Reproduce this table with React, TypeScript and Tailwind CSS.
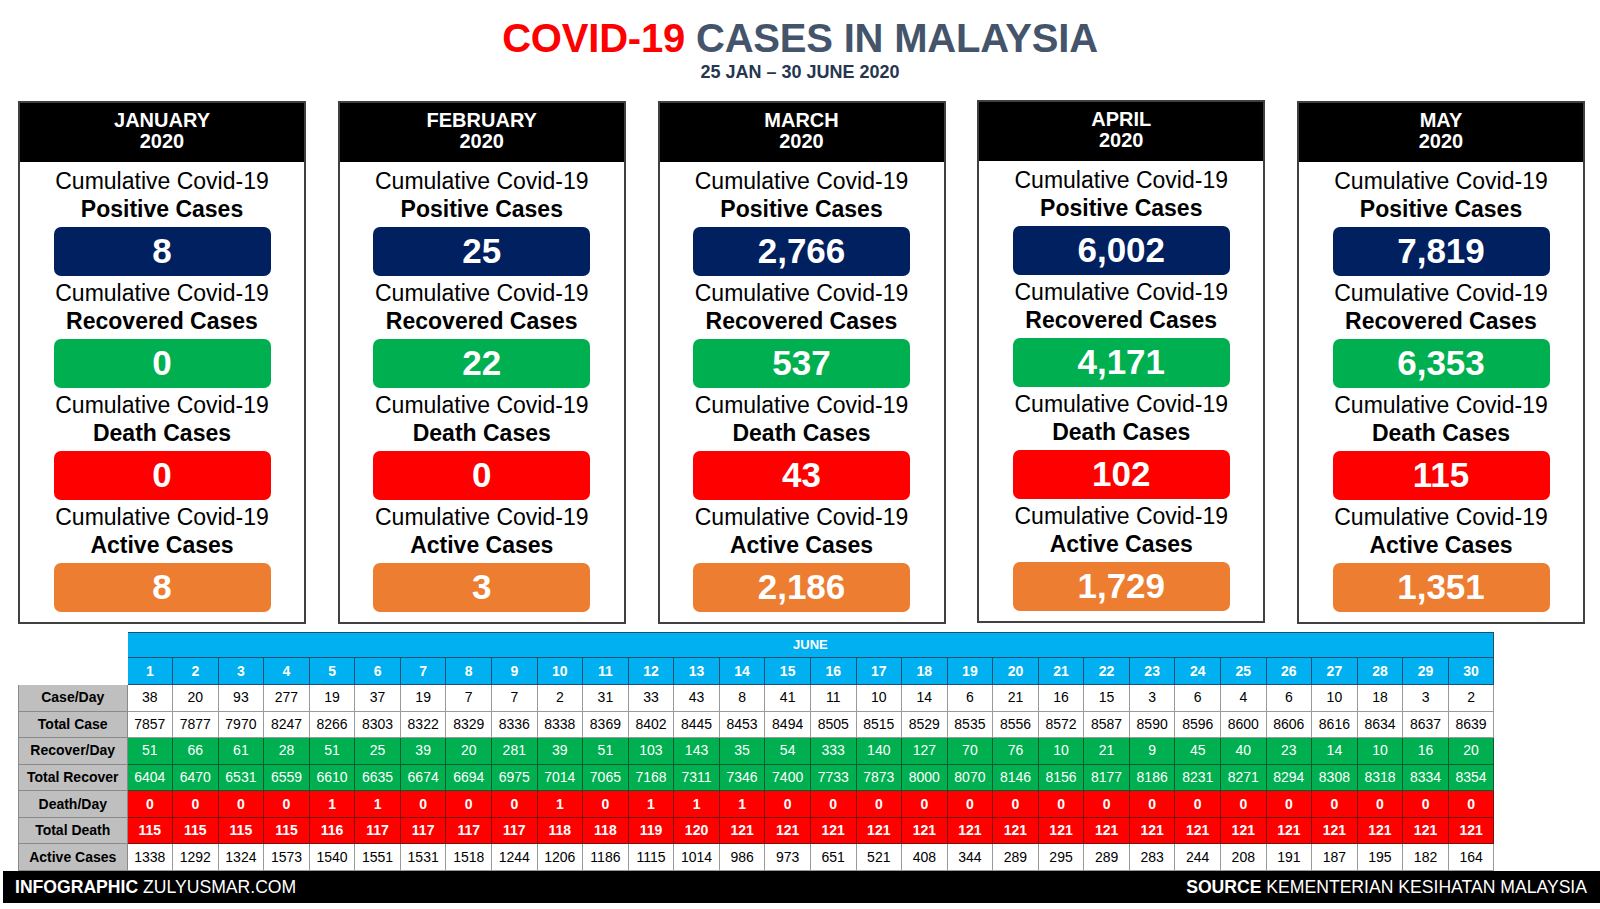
const MONTHS = [
  { month: "JANUARY", values: ["8", "0", "0", "8"] },
  { month: "FEBRUARY", values: ["25", "22", "0", "3"] },
  { month: "MARCH", values: ["2,766", "537", "43", "2,186"] },
  { month: "APRIL", values: ["6,002", "4,171", "102", "1,729"], lift: true },
  { month: "MAY", values: ["7,819", "6,353", "115", "1,351"] },
];

const METRICS = [
  { label: "Positive Cases", box: "bg-[#002060]" },
  { label: "Recovered Cases", box: "bg-[#00b050]" },
  { label: "Death Cases", box: "bg-[#ff0000]" },
  { label: "Active Cases", box: "bg-[#ed7d31]" },
];

const nums = (s: string) => s.split(" ");

const ROWS = [
  {
    label: "Case/Day",
    cell: "bg-white text-black border-[#9a9a9a]",
    data: nums("38 20 93 277 19 37 19 7 7 2 31 33 43 8 41 11 10 14 6 21 16 15 3 6 4 6 10 18 3 2"),
  },
  {
    label: "Total Case",
    cell: "bg-white text-black border-[#9a9a9a]",
    data: nums("7857 7877 7970 8247 8266 8303 8322 8329 8336 8338 8369 8402 8445 8453 8494 8505 8515 8529 8535 8556 8572 8587 8590 8596 8600 8606 8616 8634 8637 8639"),
  },
  {
    label: "Recover/Day",
    cell: "bg-[#00b050] text-white border-[#0d5a2c]",
    data: nums("51 66 61 28 51 25 39 20 281 39 51 103 143 35 54 333 140 127 70 76 10 21 9 45 40 23 14 10 16 20"),
  },
  {
    label: "Total Recover",
    cell: "bg-[#00b050] text-white border-[#0d5a2c]",
    data: nums("6404 6470 6531 6559 6610 6635 6674 6694 6975 7014 7065 7168 7311 7346 7400 7733 7873 8000 8070 8146 8156 8177 8186 8231 8271 8294 8308 8318 8334 8354"),
  },
  {
    label: "Death/Day",
    cell: "bg-[#ff0000] text-white font-bold border-[#7a1010]",
    data: nums("0 0 0 0 1 1 0 0 0 1 0 1 1 1 0 0 0 0 0 0 0 0 0 0 0 0 0 0 0 0"),
  },
  {
    label: "Total Death",
    cell: "bg-[#ff0000] text-white font-bold border-[#7a1010]",
    data: nums("115 115 115 115 116 117 117 117 117 118 118 119 120 121 121 121 121 121 121 121 121 121 121 121 121 121 121 121 121 121"),
  },
  {
    label: "Active Cases",
    cell: "bg-white text-black border-[#9a9a9a]",
    data: nums("1338 1292 1324 1573 1540 1551 1531 1518 1244 1206 1186 1115 1014 986 973 651 521 408 344 289 295 289 283 244 208 191 187 195 182 164"),
  },
];

const DAYS = Array.from({ length: 30 }, (_, i) => i + 1);

function MonthCard({ month, values, lift }: { month: string; values: string[]; lift?: boolean }) {
  return (
    <div className={`w-[288px] h-[523px] border-2 border-[#404040] bg-white flex flex-col ${lift ? "-mt-px" : ""}`}>
      <div className="h-[59px] bg-black text-white font-bold text-[20px] leading-[21px] flex flex-col items-center justify-center pb-[3px]">
        <span>{month}</span>
        <span>2020</span>
      </div>
      <div className="pt-[6px] flex flex-col gap-[4.5px]">
        {METRICS.map((m, i) => (
          <div key={m.label} className="flex flex-col items-center">
            <div className="text-[23px] leading-[27.5px] text-black">Cumulative Covid-19</div>
            <div className="text-[23px] leading-[27.5px] text-black font-bold">{m.label}</div>
            <div className={`${m.box} mt-[3.5px] w-[217px] h-[49px] rounded-[7px] flex items-center justify-center text-white font-bold text-[35px]`}>
              {values[i]}
            </div>
          </div>
        ))}
      </div>
    </div>
  );
}

export default function App() {
  return (
    <div className="w-[1600px] h-[909px] bg-white overflow-hidden font-['Liberation_Sans',Arial,sans-serif]">
      {/* Title */}
      <div className="pt-[16px] flex flex-col items-center">
        <h1 className="text-[40px] leading-[44px] font-bold tracking-[-0.2px]">
          <span className="text-[#ff0000]">COVID-19</span> <span className="text-[#44546a]">CASES IN MALAYSIA</span>
        </h1>
        <div className="mt-[1px] text-[18px] leading-[22px] font-bold text-[#263650]">25 JAN – 30 JUNE 2020</div>
      </div>

      {/* Month cards */}
      <div className="mt-[18px] ml-[18px] w-[1567px] flex justify-between items-start">
        {MONTHS.map((m) => (
          <MonthCard key={m.month} {...m} />
        ))}
      </div>

      {/* June table */}
      <div className="mt-[8px] ml-[18px] grid grid-cols-[109.5px_repeat(30,45.57px)] text-[14px]">
        <div className="h-[26px]" />
        <div className="col-span-30 h-[26px] bg-[#00b0f0] border-t border-b border-r border-[#1c4f73] text-white font-bold text-[13px] flex items-center justify-center">
          JUNE
        </div>
        <div className="h-[27px]" />
        {DAYS.map((d) => (
          <div key={d} className="h-[27px] bg-[#00b0f0] border-r border-b border-[#1c4f73] text-white font-bold flex items-center justify-center">
            {d}
          </div>
        ))}
        {ROWS.map((r) => (
          <div key={r.label} className="contents">
            <div className="h-[26.57px] bg-[#bfbfbf] border-l border-r border-b border-[#8a8a8a] font-bold text-black flex items-center justify-center">
              {r.label}
            </div>
            {r.data.map((v, i) => (
              <div key={i} className={`h-[26.57px] border-r border-b flex items-center justify-center ${r.cell}`}>
                {v}
              </div>
            ))}
          </div>
        ))}
      </div>

      {/* Footer */}
      <div className="ml-[3px] h-[32px] bg-black text-white text-[17.6px] flex items-center justify-between pl-[12px] pr-[13px]">
        <div>
          <span className="font-bold">INFOGRAPHIC</span> ZULYUSMAR.COM
        </div>
        <div>
          <span className="font-bold">SOURCE</span> KEMENTERIAN KESIHATAN MALAYSIA
        </div>
      </div>
    </div>
  );
}
